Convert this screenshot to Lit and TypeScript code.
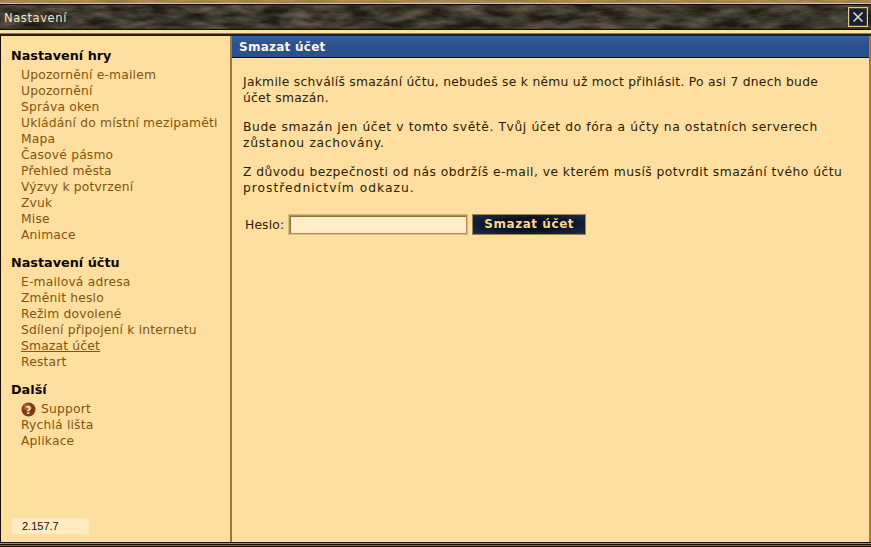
import { LitElement, html, css } from "lit";
import { customElement } from "lit/decorators.js";

const groups: { title: string; items: string[] }[] = [
  { title: "Nastavení hry", items: ["Upozornění e-mailem", "Upozornění", "Správa oken", "Ukládání do místní mezipaměti", "Mapa", "Časové pásmo", "Přehled města", "Výzvy k potvrzení", "Zvuk", "Mise", "Animace"] },
  { title: "Nastavení účtu", items: ["E-mailová adresa", "Změnit heslo", "Režim dovolené", "Sdílení připojení k internetu", "Smazat účet", "Restart"] },
  { title: "Další", items: ["Support", "Rychlá lišta", "Aplikace"] },
];

@customElement("app-root")
export class AppRoot extends LitElement {
  static styles = css`
    :host { display: block; width: 871px; height: 547px; overflow: hidden; font-family: "DejaVu Sans", Verdana, sans-serif; font-size: 12px; color: #3a2a0a; background: #1c120a; }
    .frame { display: flex; flex-direction: column; height: 547px; }
    .wood { height: 3px; position: relative; overflow: hidden; background: #b08c54; }
    .tex { position: absolute; left: 0; top: 0; display: block; }
    .rule { height: 2px; background: linear-gradient(#d9c9a0 0 1px, #0c0805 1px); }
    .titlebar { height: 24px; position: relative; overflow: hidden; display: flex; align-items: center; justify-content: space-between; padding: 0 3px 0 4px; background: #1f1a12; border-bottom: 1px solid #0d0a06; }
    .titlebar .t { position: relative; color: #f0e6c8; font-size: 11.5px; letter-spacing: 0.6px; margin-top: 2px; }
    .close { position: relative; width: 20px; height: 20px; box-sizing: border-box; border: 1px solid #e2c987; box-shadow: inset 0 0 0 1px #54431f; background: #14203a; display: flex; align-items: center; justify-content: center; }
    .gold1 { height: 4px; background: linear-gradient(#f9e2a6 0 3px, #9c7c3e 3px); }
    .gold2 { height: 2px; background: #2a1c0a; }
    .body { flex: 1; min-height: 0; display: flex; background: #fedf9f; border-left: 1px solid #17100a; border-right: 2px solid #a87a24; }
    .side { width: 231px; flex: none; box-sizing: border-box; padding: 11px 0 0 10px; border-right: 2px solid #9b7a3c; display: flex; flex-direction: column; position: relative; }
    .group { margin-bottom: 11px; }
    .group h3 { margin: 0; font-size: 12.8px; font-weight: 700; line-height: 17px; color: #0c0804; height: 20px; }
    a.item { display: flex; align-items: center; gap: 5px; height: 16px; line-height: 16px; margin-left: 10px; color: #84540c; white-space: nowrap; font-size: 12.3px; letter-spacing: 0.19px; }
    a.item.on { text-decoration: underline; }
    .help { width: 15px; height: 15px; flex: none; }
    .ver { position: absolute; left: 11px; bottom: 8px; width: 77px; height: 16px; box-sizing: border-box; padding-left: 10px; background: #feebc2; color: #1a1208; font-family: "Liberation Sans", Arial, sans-serif; font-size: 11px; line-height: 16px; }
    .main { flex: 1; min-width: 0; }
    .head { height: 22px; box-sizing: border-box; padding-left: 7px; background: linear-gradient(#3463a6, #2b5090 40%, #2b5090); border-bottom: 1px solid #0e0e12; color: #fff5dc; font-weight: 700; font-size: 12px; line-height: 22px; letter-spacing: 0.25px; }
    .content { padding: 16px 25px 0 11px; }
    p { margin: 0 0 13px; line-height: 16px; font-size: 12.3px; color: #2c2008; }
    .p1 { letter-spacing: 0.28px; }
    .p2 { letter-spacing: 0.6px; }
    .p3 { letter-spacing: 0.46px; }
    .l2 { letter-spacing: 0.71px; }
    .l3 { letter-spacing: 0.99px; }
    .form { display: flex; align-items: center; margin-top: 18px; padding-left: 2px; gap: 4px; }
    .form label { color: #2c2008; font-size: 12.3px; letter-spacing: 0.15px; }
    .input { width: 180px; height: 21px; box-sizing: border-box; border: 2px solid #b09050; outline: 1px solid #d8bd80; outline-offset: -1px; background: #feedc8; box-shadow: inset 1px 1px 0 #8f7237; }
    .btn { width: 114px; height: 21px; box-sizing: border-box; border: 1px solid #9a8350; background: radial-gradient(ellipse at center, #0a0f1c 40%, #1b2d50 100%); color: #f6d88e; font-weight: 700; font-size: 12px; letter-spacing: 0.55px; text-align: center; line-height: 19px; font-family: inherit; padding: 0; }
    .foot { height: 5px; background: linear-gradient(#1d1208 0 1px, #a88a58 1px 2px, #1d1208 2px 3px, #7a5f38 3px 4px, #1d1208 4px); }
  `;

  render() {
    return html`<div class="frame">
      <div class="wood"><svg class="tex" width="871" height="3"><filter id="w"><feTurbulence type="fractalNoise" baseFrequency="0.03 0.6" numOctaves="3" seed="4"/><feColorMatrix values="0 0 0 0 0.25  0 0 0 0 0.16  0 0 0 0 0.06  1.6 0 0 0 -0.55"/></filter><rect width="871" height="3" filter="url(#w)"/></svg></div>
      <div class="rule"></div>
      <div class="titlebar">
        <svg class="tex" width="871" height="24"><filter id="n"><feTurbulence type="fractalNoise" baseFrequency="0.035 0.12" numOctaves="4" seed="7"/><feColorMatrix values="0 0 0 0 0.29  0 0 0 0 0.25  0 0 0 0 0.18  1 0 0 0 -0.25"/></filter><rect width="871" height="24" filter="url(#n)"/></svg>
        <span class="t">Nastavení</span>
        <span class="close"><svg width="12" height="12" viewBox="0 0 12 12"><path d="M1.5 1.5 L10.5 10.5 M10.5 1.5 L1.5 10.5" stroke="#efe0b0" stroke-width="1.5" fill="none"/></svg></span>
      </div>
      <div class="gold1"></div>
      <div class="gold2"></div>
      <div class="body">
        <div class="side">
          ${groups.map((g) => html`<div class="group">
            <h3>${g.title}</h3>
            ${g.items.map((i) => html`<a class="item ${i === "Smazat účet" ? "on" : ""}">${i === "Support" ? html`<svg class="help" viewBox="0 0 15 15"><circle cx="7.5" cy="7.5" r="7" fill="#7f3a12"/><circle cx="6" cy="5" r="3.5" fill="#b9703c" opacity=".7"/><text x="7.5" y="11.5" font-size="11" font-weight="700" text-anchor="middle" fill="#f2e4c8" font-family="DejaVu Sans">?</text></svg>` : ""}${i}</a>`)}
          </div>`)}
          <div class="ver">2.157.7</div>
        </div>
        <div class="main">
          <div class="head">Smazat účet</div>
          <div class="content">
            <p class="p1">Jakmile schválíš smazání účtu, nebudeš se k němu už moct přihlásit. Po asi 7 dnech bude účet smazán.</p>
            <p class="p2">Bude smazán jen účet v tomto světě. Tvůj účet do fóra a účty na ostatních serverech <span class="l2">zůstanou zachovány.</span></p>
            <p class="p3">Z důvodu bezpečnosti od nás obdržíš e-mail, ve kterém musíš potvrdit smazání tvého účtu <span class="l3">prostřednictvím odkazu.</span></p>
            <div class="form"><label>Heslo:</label><div class="input"></div><button class="btn">Smazat účet</button></div>
          </div>
        </div>
      </div>
      <div class="foot"></div>
    </div>`;
  }
}
